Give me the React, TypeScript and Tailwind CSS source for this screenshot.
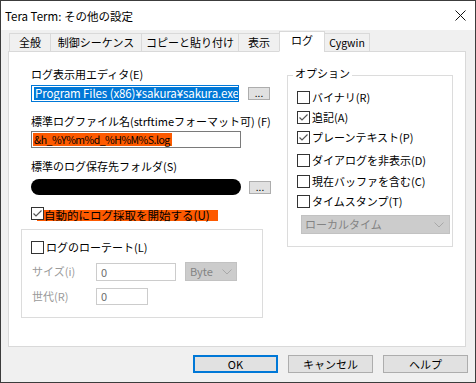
import React from 'react';

const FONT = { fontFamily: '"Noto Sans CJK JP", "Noto Sans", sans-serif' };

function Check({ checked }: { checked?: boolean }) {
  return (
    <span className="relative w-[13px] h-[13px] border border-[#333333] bg-white shrink-0 flex items-center justify-center">
      {checked && (
        <svg width="11" height="11" viewBox="0 0 11 11" className="relative z-10">
          <path d="M1.5 5.5 L4 8 L9.5 2.5" fill="none" stroke="#555555" strokeWidth="1.2" />
        </svg>
      )}
    </span>
  );
}

function Chevron() {
  return (
    <svg width="10" height="6" viewBox="0 0 10 6">
      <path d="M0.5 0.5 L5 5 L9.5 0.5" fill="none" stroke="#a8a8a8" strokeWidth="1" />
    </svg>
  );
}

function Dots() {
  return (
    <button className="shrink-0 w-[22px] h-[13px] bg-[#e1e1e1] border border-[#adadad] text-[10px] leading-[10px] text-black flex items-end justify-center pb-[1px]">
      ...
    </button>
  );
}

const tabs = ['全般', '制御シーケンス', 'コピーと貼り付け', '表示', 'ログ', 'Cygwin'];
const tabWidths = ['w-[42px]', 'w-[92px]', 'w-[98px]', 'w-[42px]', 'w-[46px]', 'w-[46px]'];

const options: { label: string; checked: boolean; mt: string }[] = [
  { label: 'バイナリ(R)', checked: false, mt: 'mt-0' },
  { label: '追記(A)', checked: true, mt: 'mt-[6px]' },
  { label: 'プレーンテキスト(P)', checked: true, mt: 'mt-[6px]' },
  { label: 'ダイアログを非表示(D)', checked: false, mt: 'mt-[9px]' },
  { label: '現在バッファを含む(C)', checked: false, mt: 'mt-[7px]' },
  { label: 'タイムスタンプ(T)', checked: false, mt: 'mt-[6px]' },
];

export default function App() {
  return (
    <div style={FONT} className="w-[476px] h-[383px] border border-[#3c3c3c] flex flex-col text-[11px] text-black select-none">
      {/* title bar */}
      <div className="h-[29px] bg-white flex items-center justify-between pl-[4px] pr-[9px]">
        <span className="text-[11.5px] leading-[16px]">Tera Term: その他の設定</span>
        <svg width="11" height="11" viewBox="0 0 11 11">
          <path d="M0.5 0.5 L10.5 10.5 M10.5 0.5 L0.5 10.5" stroke="#111" strokeWidth="1" />
        </svg>
      </div>

      <div className="flex-1 bg-[#f0f0f0] flex flex-col pt-[2px]">
        {/* tabs */}
        <div className="relative z-10 flex items-end h-[20px] pl-[8px] -mb-px">
          {tabs.map((t, i) => {
            const sel = t === 'ログ';
            return (
              <div
                key={t}
                className={`${tabWidths[i]} flex items-center justify-center border border-[#d9d9d9] ${
                  sel ? 'h-[21px] bg-white border-b-white pb-[2px] -ml-px' : 'h-[19px] bg-[#f0f0f0] -ml-px first:ml-0'
                } ${i === 5 ? 'text-[10.5px]' : ''}`}
              >
                {t}
              </div>
            );
          })}
        </div>

        {/* panel */}
        <div className="ml-[7px] w-[458px] h-[296px] border border-[#d9d9d9] bg-white flex">
          {/* left column */}
          <div className="ml-[12px] w-[242px] shrink-0 flex flex-col pt-[14px]">
            <div className="pl-[10px] flex flex-col">
              <div className="h-[16px] leading-[16px]">ログ表示用エディタ(E)</div>
              <div className="mt-[3px] flex items-center">
                <div className="shrink-0 w-[208px] h-[17px] border border-[#0078d7] flex items-center pl-[2px] overflow-hidden">
                  <span className="bg-[#0078d7] text-white text-[11.5px] leading-[13px] px-[1px] whitespace-nowrap tracking-[-0.1px]">
                    Program Files (x86)¥sakura¥sakura.exe
                  </span>
                </div>
                <div className="ml-[9px]">
                  <Dots />
                </div>
              </div>
              <div className="mt-[11px] h-[16px] leading-[16px] whitespace-nowrap">
                標準ログファイル名(strftimeフォーマット可) (F)
              </div>
              <div className="mt-[2px] w-[210px] h-[17px] border border-[#7a7a7a] flex items-center pl-[1px]">
                <span className="bg-[#fe5a00] h-[13px] leading-[13px] pl-[1px] pr-[2px] whitespace-nowrap text-[10.5px] tracking-[-0.5px]">
                  &amp;h_%Y%m%d_%H%M%S.log
                </span>
              </div>
              <div className="mt-[10px] h-[16px] leading-[16px]">標準のログ保存先フォルダ(S)</div>
              <div className="mt-[5px] flex items-center">
                <div className="shrink-0 w-[210px] h-[16px] rounded-full bg-black" />
                <div className="ml-[8px]">
                  <Dots />
                </div>
              </div>
              <div className="mt-[11px] h-[14px] flex items-center">
                <Check checked />
                <span className="-ml-[7px] bg-[#fe5a00] h-[11px] leading-[11px] mt-[4px] pl-[7px] w-[181px] whitespace-nowrap text-[11.5px]">
                  自動的にログ採取を開始する(U)
                </span>
              </div>
            </div>

            {/* rotate group */}
            <div className="mt-[9px] h-[89px] border border-[#dcdcdc] pl-[9px] pt-[10px] flex flex-col">
              <div className="h-[14px] flex items-center gap-[2px]">
                <Check />
                <span className="leading-[14px]">ログのローテート(L)</span>
              </div>
              <div className="mt-[8px] flex items-center text-[#9a9a9a]">
                <span className="w-[65px] pl-[1px]">サイズ(i)</span>
                <div className="w-[80px] h-[18px] border border-[#cccccc] pl-[4px] leading-[16px] text-[#6d6d6d]">0</div>
                <div className="ml-[9px] w-[52px] h-[19px] bg-[#cccccc] border border-[#c2c2c2] flex items-center justify-between pl-[4px] pr-[4px] text-[#838383]">
                  <span>Byte</span>
                  <Chevron />
                </div>
              </div>
              <div className="mt-[7px] flex items-center text-[#9a9a9a]">
                <span className="w-[65px] pl-[1px]">世代(R)</span>
                <div className="w-[52px] h-[17px] border border-[#cccccc] pl-[4px] leading-[15px] text-[#6d6d6d]">0</div>
              </div>
            </div>
          </div>

          {/* right column */}
          <div className="ml-[24px] mt-[23px] w-[166px] h-[172px] relative border border-[#dcdcdc] pl-[9px] pt-[14px] flex flex-col">
            <span className="absolute -top-[11px] left-[5px] bg-white px-[2px] leading-[16px]">オプション</span>
            {options.map((o) => (
              <div key={o.label} className={`${o.mt} h-[14px] flex items-center gap-[2px] whitespace-nowrap`}>
                <Check checked={o.checked} />
                <span className="leading-[14px]">{o.label}</span>
              </div>
            ))}
            <div className="mt-[7px] ml-[4px] w-[149px] h-[19px] bg-[#cccccc] border border-[#c2c2c2] flex items-center justify-between pl-[3px] pr-[5px] text-[#838383]">
              <span>ローカルタイム</span>
              <Chevron />
            </div>
          </div>
        </div>

        {/* buttons */}
        <div className="mt-[8px] flex justify-end gap-[10px] pr-[7px]">
          <button className="w-[85px] h-[18px] bg-[#e1e1e1] border-2 border-[#0078d7] leading-[14px]">OK</button>
          <button className="w-[85px] h-[18px] bg-[#e1e1e1] border border-[#adadad] leading-[16px]">キャンセル</button>
          <button className="w-[85px] h-[18px] bg-[#e1e1e1] border border-[#adadad] leading-[16px]">ヘルプ</button>
        </div>
      </div>
    </div>
  );
}
